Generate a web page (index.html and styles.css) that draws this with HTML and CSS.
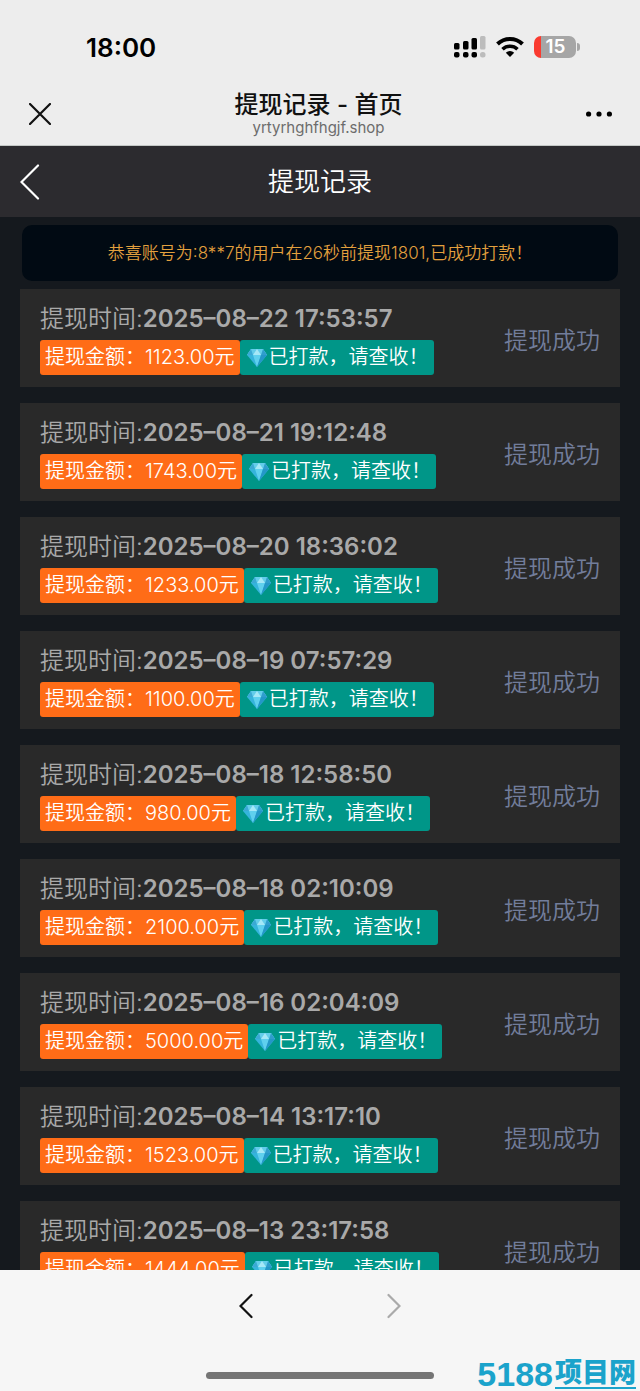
FILE: index.html
```html
<!DOCTYPE html>
<html lang="zh-CN">
<head>
    <meta charset="UTF-8">
    <meta name="viewport" content="width=device-width, initial-scale=1.0">
    <title>提现记录 - 首页</title>
    <link rel="stylesheet" href="styles.css">
</head>
<body>
    <svg class="defs" width="0" height="0" aria-hidden="true">
        <symbol id="gem" viewBox="0 0 22 20">
            <path d="M5 1h12l4 6-10 12L1 7z" fill="#35b4dc"/>
            <path d="M5 1h12l4 6H1z" fill="#63cdea"/>
            <path d="M5 1l2 6H1z" fill="#3aa9d4"/>
            <path d="M11 1l4 6H7z" fill="#a5e8f7"/>
            <path d="M17 1l4 6h-6z" fill="#2f9dcc"/>
            <path d="M7 7h8l-4 12z" fill="#5fd0ee"/>
            <path d="M15 7h6L11 19z" fill="#2497c8"/>
        </symbol>
    </svg>
    <div class="main">
        <div class="status">
            <span class="clock">18:00</span>
            <div class="status-icons">
                <svg width="32" height="22" viewBox="0 0 32 22">
                    <g fill="#000">
                        <rect x="0" y="7" width="5.5" height="6.5" rx="1.5"/>
                        <rect x="9" y="5" width="5.5" height="8.5" rx="1.5"/>
                        <rect x="17.5" y="2" width="5.5" height="11.5" rx="1.5"/>
                        <rect x="0" y="16" width="5.5" height="5.5" rx="2"/>
                        <rect x="9" y="16" width="5.5" height="5.5" rx="2"/>
                        <rect x="17.5" y="16" width="5.5" height="5.5" rx="2"/>
                    </g>
                    <g fill="#bcbcbc">
                        <rect x="26" y="0" width="5.5" height="13.5" rx="1.5"/>
                        <rect x="26" y="16" width="5.5" height="5.5" rx="2.5"/>
                    </g>
                </svg>
                <svg width="28" height="22" viewBox="0 0 28 22">
                    <path d="M1.5 8a18 18 0 0 1 25 0" fill="none" stroke="#000" stroke-width="4"/>
                    <path d="M6.5 13.2a11 11 0 0 1 15 0" fill="none" stroke="#000" stroke-width="3.6"/>
                    <path d="M14 21l-4.2-4.3a6 6 0 0 1 8.4 0z" fill="#000"/>
                </svg>
                <div class="battery">
                    <span class="cell">15</span>
                    <span class="cap"></span>
                </div>
            </div>
        </div>
        <div class="nav">
            <button type="button" class="icon" aria-label="关闭">
                <svg width="22" height="22" viewBox="0 0 22 22"><path d="M1 1l20 20M21 1L1 21" stroke="#111" stroke-width="2.2" stroke-linecap="round"/></svg>
            </button>
            <div class="nav-title">
                <div class="name">提现记录 - 首页</div>
                <div class="url">yrtyrhghfhgjf.shop</div>
            </div>
            <button type="button" class="icon" aria-label="更多">
                <svg width="26" height="22" viewBox="0 0 26 22"><circle cx="2.6" cy="11" r="2.6"/><circle cx="13" cy="11" r="2.6"/><circle cx="23.4" cy="11" r="2.6"/></svg>
            </button>
        </div>
        <div class="header">
            <button type="button" class="icon" aria-label="返回">
                <svg width="20" height="36" viewBox="0 0 20 36"><path d="M18 1.5L1.5 18 18 34.5" fill="none" stroke="#fff" stroke-width="2.2" stroke-linecap="round"/></svg>
            </button>
            <h1>提现记录</h1>
        </div>
        <div class="content">
            <div class="notice">恭喜账号为:8**7的用户在26秒前提现1801,已成功打款！</div>
            <div class="list">
                <div class="card">
                    <div class="info">
                        <div class="time">提现时间:<b>2025–08–22 17:53:57</b></div>
                        <div class="tags"><span class="tag orange">提现金额：1123.00元</span><span class="tag green"><svg class="gem"><use href="#gem"/></svg>已打款，请查收！</span></div>
                    </div>
                    <div class="state">提现成功</div>
                </div>
                <div class="card">
                    <div class="info">
                        <div class="time">提现时间:<b>2025–08–21 19:12:48</b></div>
                        <div class="tags"><span class="tag orange">提现金额：1743.00元</span><span class="tag green"><svg class="gem"><use href="#gem"/></svg>已打款，请查收！</span></div>
                    </div>
                    <div class="state">提现成功</div>
                </div>
                <div class="card">
                    <div class="info">
                        <div class="time">提现时间:<b>2025–08–20 18:36:02</b></div>
                        <div class="tags"><span class="tag orange">提现金额：1233.00元</span><span class="tag green"><svg class="gem"><use href="#gem"/></svg>已打款，请查收！</span></div>
                    </div>
                    <div class="state">提现成功</div>
                </div>
                <div class="card">
                    <div class="info">
                        <div class="time">提现时间:<b>2025–08–19 07:57:29</b></div>
                        <div class="tags"><span class="tag orange">提现金额：1100.00元</span><span class="tag green"><svg class="gem"><use href="#gem"/></svg>已打款，请查收！</span></div>
                    </div>
                    <div class="state">提现成功</div>
                </div>
                <div class="card">
                    <div class="info">
                        <div class="time">提现时间:<b>2025–08–18 12:58:50</b></div>
                        <div class="tags"><span class="tag orange">提现金额：980.00元</span><span class="tag green"><svg class="gem"><use href="#gem"/></svg>已打款，请查收！</span></div>
                    </div>
                    <div class="state">提现成功</div>
                </div>
                <div class="card">
                    <div class="info">
                        <div class="time">提现时间:<b>2025–08–18 02:10:09</b></div>
                        <div class="tags"><span class="tag orange">提现金额：2100.00元</span><span class="tag green"><svg class="gem"><use href="#gem"/></svg>已打款，请查收！</span></div>
                    </div>
                    <div class="state">提现成功</div>
                </div>
                <div class="card">
                    <div class="info">
                        <div class="time">提现时间:<b>2025–08–16 02:04:09</b></div>
                        <div class="tags"><span class="tag orange">提现金额：5000.00元</span><span class="tag green"><svg class="gem"><use href="#gem"/></svg>已打款，请查收！</span></div>
                    </div>
                    <div class="state">提现成功</div>
                </div>
                <div class="card">
                    <div class="info">
                        <div class="time">提现时间:<b>2025–08–14 13:17:10</b></div>
                        <div class="tags"><span class="tag orange">提现金额：1523.00元</span><span class="tag green"><svg class="gem"><use href="#gem"/></svg>已打款，请查收！</span></div>
                    </div>
                    <div class="state">提现成功</div>
                </div>
                <div class="card">
                    <div class="info">
                        <div class="time">提现时间:<b>2025–08–13 23:17:58</b></div>
                        <div class="tags"><span class="tag orange">提现金额：1444.00元</span><span class="tag green"><svg class="gem"><use href="#gem"/></svg>已打款，请查收！</span></div>
                    </div>
                    <div class="state">提现成功</div>
                </div>
            </div>
        </div>
        <div class="footer">
            <div class="pager">
                <button type="button" class="icon" aria-label="后退">
                    <svg width="14" height="26" viewBox="0 0 14 26"><path d="M12.5 2L1.5 13l11 11" fill="none" stroke="#111" stroke-width="2.2" stroke-linecap="round"/></svg>
                </button>
                <button type="button" class="icon" aria-label="前进">
                    <svg width="14" height="26" viewBox="0 0 14 26"><path d="M1.5 2l11 11-11 11" fill="none" stroke="#aaa" stroke-width="2.2" stroke-linecap="round"/></svg>
                </button>
            </div>
            <div class="home-bar"></div>
        </div>
        <div class="watermark"><span class="num">5188</span><span class="word">项目网</span></div>
    </div>
</body>
</html>
```
FILE: styles.css
```css
* {
    padding: 0;
    margin: 0;
    box-sizing: border-box;
}

body {
    font-family: Inter, "Noto Sans CJK SC", sans-serif;
    background-color: #15191e;
}
.defs {
    position: absolute;
}
.main {
    position: relative;
    height: 100vh;
    display: flex;
    flex-direction: column;
    overflow: hidden;
}
.icon {
    display: flex;
    border: none;
    background: none;
    cursor: pointer;
}

/* phone status bar */
.status {
    flex: none;
    height: 82px;
    padding: 12px 60px 0 86px;
    display: flex;
    align-items: center;
    justify-content: space-between;
    background-color: #ededed;
}
.clock {
    font-size: 26px;
    font-weight: 600;
    color: #000;
}
.status-icons {
    display: flex;
    align-items: center;
    gap: 10px;
}
.battery {
    display: flex;
    align-items: center;
    gap: 1px;
}
.cell {
    width: 42px;
    height: 22px;
    padding-left: 1px;
    border-radius: 7px;
    background: linear-gradient(to right, #fa3b30 7px, #a6a6a6 7px);
    color: #fff;
    font-size: 19px;
    font-weight: 600;
    line-height: 22px;
    text-align: center;
}
.cap {
    width: 3px;
    height: 8px;
    border-radius: 0 4px 4px 0;
    background-color: #a6a6a6;
}

/* browser title bar */
.nav {
    flex: none;
    height: 64px;
    padding: 0 28px 0 29px;
    display: flex;
    align-items: center;
    justify-content: space-between;
    background-color: #ededed;
    border-bottom: 1px solid #c4c8c6;
}
.nav-title {
    height: 46px;
    text-align: center;
}
.name {
    font-size: 24px;
    font-weight: 500;
    line-height: 28px;
    color: #111;
}
.url {
    font-size: 15px;
    line-height: 18px;
    color: #6c6c6c;
}

.header {
    flex: none;
    height: 71px;
    padding: 0 20px;
    display: grid;
    grid-template-columns: 20px 1fr 20px;
    align-items: center;
    background-color: #2c2b2f;
}
.header h1 {
    font-size: 26px;
    font-weight: 350;
    line-height: 36px;
    text-align: center;
    color: #fff;
}

.content {
    flex: 1;
    min-height: 0;
    padding: 8px 20px 0;
    overflow: hidden;
}
.notice {
    height: 56px;
    margin: 0 2px 8px;
    border-radius: 10px;
    background-color: #010a13;
    color: #e3a03e;
    font-size: 17px;
    font-weight: 350;
    line-height: 56px;
    text-align: center;
}
.list {
    display: flex;
    flex-direction: column;
    gap: 16px;
}
.card {
    height: 98px;
    padding: 0 20px;
    display: flex;
    align-items: center;
    justify-content: space-between;
    background-color: #292929;
}
.time {
    margin-bottom: 3px;
    font-size: 24px;
    font-weight: 350;
    line-height: 36px;
    color: #a9a9a9;
}
.time b {
    font-weight: 600;
}
.tags {
    display: flex;
}
.tag {
    height: 35px;
    padding: 0 5px;
    display: flex;
    align-items: center;
    border-radius: 3px;
    color: #fff;
    font-size: 20px;
    font-weight: 350;
    line-height: 35px;
}
.orange {
    background-color: #ff6c17;
}
.green {
    background-color: #009688;
}
.gem {
    width: 24px;
    height: 20px;
}
.state {
    font-size: 24px;
    font-weight: 350;
    color: #727d9b;
}

.footer {
    flex: none;
    height: 121px;
    padding: 23px 0 12px;
    display: flex;
    flex-direction: column;
    align-items: center;
    justify-content: space-between;
    background-color: #f6f6f6;
}
.pager {
    display: flex;
    gap: 134px;
}
.home-bar {
    width: 228px;
    height: 7px;
    border-radius: 4px;
    background-color: #757575;
}

/* site mark over the bottom corner */
.watermark {
    position: absolute;
    right: 4px;
    bottom: 0;
    display: flex;
    align-items: center;
    gap: 2px;
    color: #1ba3cb;
}
.num {
    font-family: "Liberation Sans", sans-serif;
    font-size: 34px;
    font-weight: 700;
    line-height: 34px;
}
.word {
    border-bottom: 2px solid #1ba3cb;
    font-size: 27px;
    font-weight: 900;
    line-height: 28px;
}
```
